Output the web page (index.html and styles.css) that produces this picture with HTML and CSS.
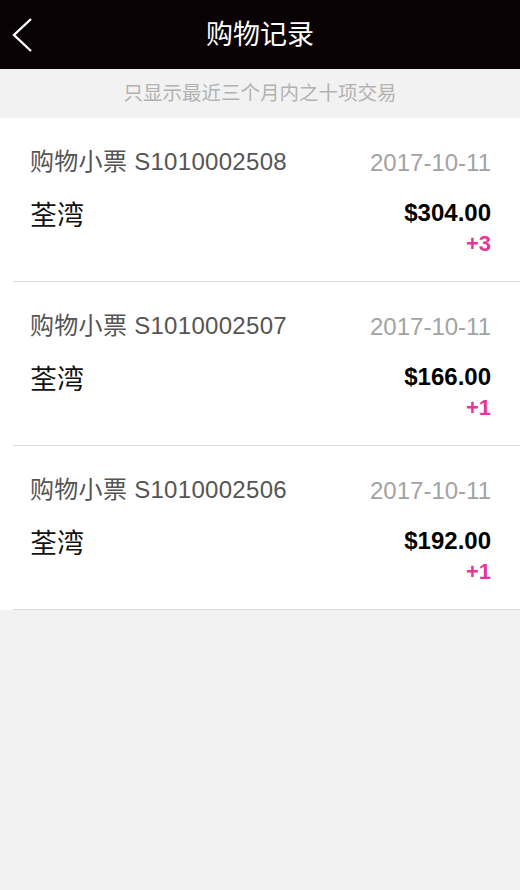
FILE: index.html
```html
<!DOCTYPE html>
<html lang="zh">
<head>
<meta charset="utf-8">
<title>购物记录</title>
<link rel="stylesheet" href="styles.css">
</head>
<body>
<header class="topbar">
  <a class="back" href="#" aria-label="返回">
    <svg width="24" height="40" viewBox="0 0 24 40"><polyline points="20,2 3,18 20,34" fill="none" stroke="#fff" stroke-width="2.4"/></svg>
  </a>
  <h1 class="title">购物记录</h1>
</header>
<div class="notice">只显示最近三个月内之十项交易</div>
<ul class="list">
  <li class="item">
    <div class="item-inner">
      <div class="row row-top"><span class="receipt">购物小票 S1010002508</span><span class="date">2017-10-11</span></div>
      <div class="row row-main"><span class="store">荃湾</span><span class="amount">$304.00</span></div>
      <div class="points">+3</div>
    </div>
  </li>
  <li class="item">
    <div class="item-inner">
      <div class="row row-top"><span class="receipt">购物小票 S1010002507</span><span class="date">2017-10-11</span></div>
      <div class="row row-main"><span class="store">荃湾</span><span class="amount">$166.00</span></div>
      <div class="points">+1</div>
    </div>
  </li>
  <li class="item">
    <div class="item-inner">
      <div class="row row-top"><span class="receipt">购物小票 S1010002506</span><span class="date">2017-10-11</span></div>
      <div class="row row-main"><span class="store">荃湾</span><span class="amount">$192.00</span></div>
      <div class="points">+1</div>
    </div>
  </li>
</ul>
</body>
</html>
```
FILE: styles.css
```css
html, body {
  margin: 0;
  padding: 0;
}
body {
  background: #f2f2f2;
  font-family: "Liberation Sans", "Noto Sans CJK SC", sans-serif;
  width: 520px;
  height: 890px;
}
.topbar {
  position: relative;
  height: 69px;
  background: #0a0305;
  display: flex;
  align-items: center;
  justify-content: center;
}
.back {
  position: absolute;
  left: 11px;
  top: 17px;
  display: block;
  width: 24px;
  height: 40px;
}
.back svg {
  display: block;
}
.title {
  margin: 0;
  color: #fff;
  font-weight: normal;
  font-size: 27px;
  line-height: 34px;
}
.notice {
  height: 49px;
  line-height: 49px;
  text-align: center;
  color: #b2b2b2;
  font-size: 19.5px;
}
.list {
  list-style: none;
  margin: 0;
  padding: 0;
  background: #fff;
}
.item {
  padding-left: 13px;
}
.item-inner {
  border-bottom: 1px solid #dcdcdc;
  padding: 30px 29px 24px 17px;
}
.row {
  display: flex;
  justify-content: space-between;
  align-items: center;
}
.row-top {
  height: 30px;
  font-size: 24px;
  line-height: 30px;
}
.receipt {
  color: #555;
  letter-spacing: 0.3px;
  position: relative;
  top: -1px;
}
.date {
  color: #a3a3a3;
}
.row-main {
  height: 30px;
  margin-top: 20px;
}
.store {
  color: #111;
  font-size: 27px;
}
.amount {
  color: #000;
  font-weight: bold;
  font-size: 24px;
}
.points {
  margin-top: 3px;
  height: 26px;
  line-height: 26px;
  text-align: right;
  color: #e8359c;
  font-weight: bold;
  font-size: 22px;
}
```
